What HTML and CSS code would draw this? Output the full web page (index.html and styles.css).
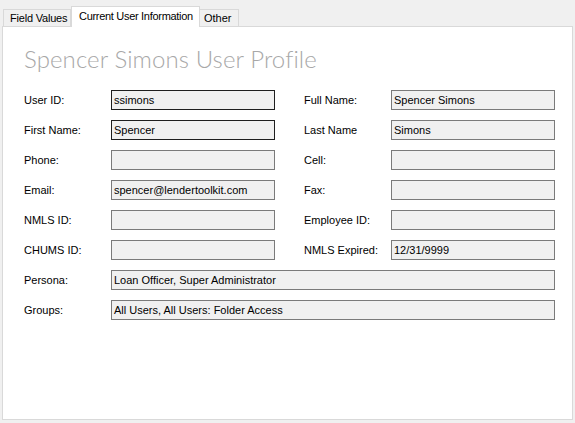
FILE: index.html
```html
<!DOCTYPE html>
<html>
<head>
	<title>User Profile</title>
	<link rel="stylesheet" href="styles.css">
</head>
<body>
	<div class="tabs">
		<div class="tab tab-first">Field Values</div>
		<div class="tab active">Current User Information</div>
		<div class="tab tab-last">Other</div>
	</div>
	<div class="panel">
		<h1 class="title">Spencer Simons User Profile</h1>
		<div class="form">
			<div class="label">User ID:</div>
			<div class="field edit">ssimons</div>
			<div class="label right">Full Name:</div>
			<div class="field">Spencer Simons</div>

			<div class="label">First Name:</div>
			<div class="field edit">Spencer</div>
			<div class="label right">Last Name</div>
			<div class="field">Simons</div>

			<div class="label">Phone:</div>
			<div class="field"></div>
			<div class="label right">Cell:</div>
			<div class="field"></div>

			<div class="label">Email:</div>
			<div class="field">spencer@lendertoolkit.com</div>
			<div class="label right">Fax:</div>
			<div class="field"></div>

			<div class="label">NMLS ID:</div>
			<div class="field"></div>
			<div class="label right">Employee ID:</div>
			<div class="field"></div>

			<div class="label">CHUMS ID:</div>
			<div class="field"></div>
			<div class="label right">NMLS Expired:</div>
			<div class="field">12/31/9999</div>

			<div class="label">Persona:</div>
			<div class="field wide">Loan Officer, Super Administrator</div>

			<div class="label">Groups:</div>
			<div class="field wide">All Users, All Users: Folder Access</div>
		</div>
	</div>
</body>
</html>
```

FILE: styles.css
```css
body{
	margin: 0;
	width: 575px;
	height: 423px;
	background: #f0f0f0;
	font-family: "Liberation Sans", Arial, sans-serif;
	font-size: 11px;
	color: #000;
	overflow: hidden;
}
.tabs{
	display: flex;
	align-items: flex-end;
	height: 26px;
	padding-left: 3px;
	box-sizing: border-box;
}
.tab{
	height: 17px;
	line-height: 17px;
	padding: 0 0 0 6px;
	border: 1px solid #d9d9d9;
	border-bottom: none;
	border-left: none;
	box-sizing: border-box;
	background: #f0f0f0;
	font-size: 11px;
	white-space: nowrap;
	overflow: hidden;
	color: #000;
}
.tab-first{
	border-left: 1px solid #d9d9d9;
	width: 68px;
	letter-spacing: -0.2px;
}
.tab.active{
	position: relative;
	height: 21px;
	line-height: 19px;
	margin-bottom: -1px;
	padding-left: 7px;
	width: 129px;
	background: #fff;
	border-left: 1px solid #d9d9d9;
	letter-spacing: -0.3px;
	z-index: 1;
}
.tab-last{
	width: 39px;
	padding-left: 4px;
}
.panel{
	margin: 0 2px;
	height: 394px;
	box-sizing: border-box;
	background: #fff;
	border: 1px solid #d9d9d9;
	padding: 0 0 0 21px;
}
.title{
	margin: 17px 0 0 0;
	height: 46px;
	font-family: Lato, "Open Sans", sans-serif;
	font-weight: 300;
	font-size: 24px;
	letter-spacing: 0.1px;
	line-height: 30px;
	color: #a8a8a8;
}
.form{
	display: grid;
	grid-template-columns: 87px 164px 29px 87px 164px;
	grid-auto-rows: 20px;
	row-gap: 10px;
}
.label{
	grid-column: 1;
	line-height: 20px;
}
.label.right{
	grid-column: 4;
}
.field{
	border: 1px solid #7a7a7a;
	background: #f0f0f0;
	padding-left: 2px;
	line-height: 18px;
	white-space: nowrap;
	overflow: hidden;
}
.field.edit{
	border-color: #1e1e1e;
}
.field.wide{
	grid-column: 2 / 6;
}
```
